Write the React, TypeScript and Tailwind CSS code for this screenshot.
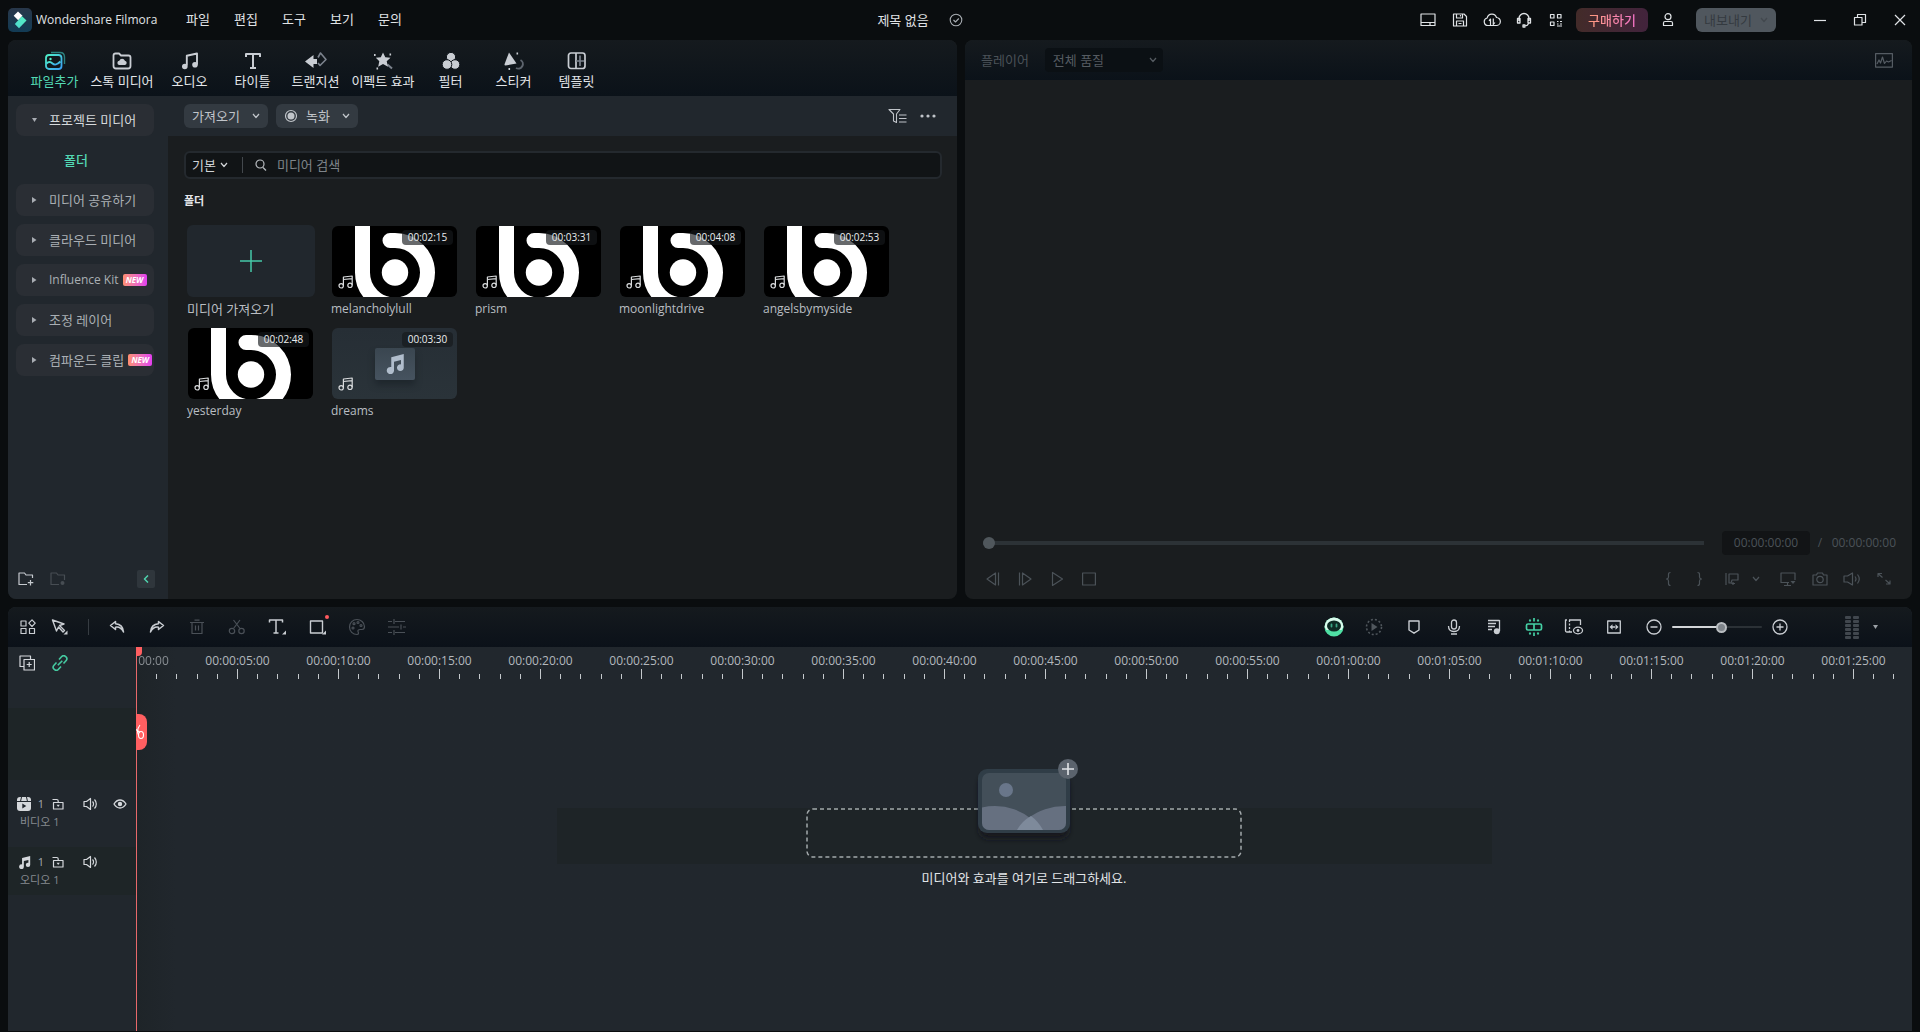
import type { ReactNode } from "react";

/* ---------- icon helpers ---------- */

type IconProps = {
  w?: number;
  h?: number;
  sw?: number;
  className?: string;
  children: ReactNode;
};

function Icon({ w = 18, h = 18, sw = 1.2, className = "", children }: IconProps) {
  return (
    <svg
      width={w}
      height={h}
      viewBox={`0 0 ${w} ${h}`}
      fill="none"
      stroke="currentColor"
      strokeWidth={sw}
      strokeLinejoin="round"
      className={`shrink-0 ${className}`}
      aria-hidden="true"
    >
      {children}
    </svg>
  );
}

function IconButton({
  label,
  className = "w-8",
  children,
}: {
  label: string;
  className?: string;
  children: ReactNode;
}) {
  return (
    <button
      type="button"
      aria-label={label}
      className={`flex h-8 shrink-0 items-center justify-center ${className}`}
    >
      {children}
    </button>
  );
}

const Chevron = ({ className = "" }: { className?: string }) => (
  <Icon w={8} h={6} sw={1.2} className={className}>
    <path d="M1 1l3 3.500L7 1" />
  </Icon>
);

const Speaker = () => (
  <Icon w={14} h={14} sw={1.2}>
    <path d="M1 4.500h2.500L7.500 1.500v11L3.500 9.500H1zM9.500 4.500a3.500 3.500 0 010 5M11.500 2.500a6.500 6.500 0 010 9" />
  </Icon>
);

const Lock = () => (
  <Icon w={12} h={12} sw={1.2}>
    <path d="M1.500 4.500h9.500v6.500h-9.500zM6.200 4.500V3a1.500 1.500 0 00-1.500-1.500H.500" />
    <path d="M4.600 6.800h3.200L6.200 9z" fill="currentColor" stroke="none" />
  </Icon>
);

const SolidNote = ({ s = 16 }: { s?: number }) => (
  <svg width={s} height={s} viewBox="0 0 16 16" fill="currentColor" aria-hidden="true">
    <path d="M5 2.500L15 0v10.800a2.700 2.700 0 11-2.200-2.500V4.800L7.200 6.200v7a2.900 2.900 0 11-2.200-2.800z" />
  </svg>
);

const OutlineNote = () => (
  <Icon w={16} h={14} sw={1.2}>
    <circle cx="3.200" cy="10.800" r="2.200" />
    <circle cx="12" cy="10.300" r="2.200" />
    <path d="M5.400 10.800V2l8.800-1v9.300M5.400 4.500l8.800-.8" />
  </Icon>
);

/* ---------- title bar ---------- */

function TitleBar() {
  return (
    <header className="flex h-10 shrink-0 items-center pl-2 text-[#e0e3e6]">
      <svg width="24" height="24" viewBox="0 0 24 24" aria-hidden="true">
        <defs>
          <linearGradient id="logoBg" x1="0" y1="0" x2="0" y2="1">
            <stop offset="0" stopColor="#28374a" />
            <stop offset="1" stopColor="#123b54" />
          </linearGradient>
          <linearGradient id="logoFg" x1="1" y1="0" x2="0" y2="1">
            <stop offset="0" stopColor="#55f0c0" />
            <stop offset="1" stopColor="#4fd8d0" />
          </linearGradient>
        </defs>
        <rect width="24" height="24" rx="5" fill="url(#logoBg)" />
        <path d="M10 3.500l4.500 4.300-4.300 4.500-4.500-4.500z" fill="#fff" />
        <path d="M14 8.300l4.500 4.200-7.500 7.700-4.200-4.200z" fill="url(#logoFg)" />
      </svg>
      <span className="ml-1 w-[115px] whitespace-nowrap text-xs">Wondershare Filmora</span>
      <nav className="mb-0.5 ml-[23px] flex text-[13px]">
        {["파일", "편집", "도구", "보기", "문의"].map((m) => (
          <button key={m} type="button" className="w-12 shrink-0 whitespace-nowrap">
            {m}
          </button>
        ))}
      </nav>
      <div className="flex flex-1 items-center justify-center gap-6 pl-3.5">
        <h1 className="text-[13px]">제목 없음</h1>
        <Icon w={14} h={14} sw={1.1} className="-ml-1 text-[#a8adb2]">
          <circle cx="7" cy="7" r="5.800" />
          <path d="M4.500 7l2 2 3.300-3.500" />
        </Icon>
      </div>
      <div className="flex items-center">
        <IconButton label="레이아웃">
          <Icon w={16} h={14}>
            <path d="M1 1h14v11.500H1zM1 9.500h14M10 9.500v3" />
          </Icon>
        </IconButton>
        <IconButton label="저장">
          <Icon w={16} h={16}>
            <path d="M1.500 2h10.500l2.500 2.500V14h-13zM4.500 2v4h6V2M4.500 14V9h7v5M8.500 3v1.500M6.500 11.500h3" />
          </Icon>
        </IconButton>
        <IconButton label="클라우드">
          <Icon w={18} h={16}>
            <path d="M5 13.500a3.800 3.800 0 01-.8-7.500A4.800 4.800 0 0113.500 5.500a4 4 0 01-.3 8zM7.500 13V7L6 8.800M10.300 6.500v6l1.600-2" />
          </Icon>
        </IconButton>
        <IconButton label="고객 지원">
          <Icon w={16} h={16} sw={1.3}>
            <path d="M3 9V6.500a5 5 0 0110 0V9M3 6.500H1.500v4.500H4V6.500zM13 6.500h1.500v4.500H12V6.500zM12.500 11q-.5 3-4 3M7 13h2v2H7z" />
          </Icon>
        </IconButton>
        <IconButton label="앱">
          <Icon w={14} h={14} sw={1.2}>
            <path d="M1.500 1.500h3.500v3.500H1.500zM8.500 1.500H12v3.500H8.500zM1.500 9H5v3.500H1.500zM8 8.500h1.500M11 8.500h2M8 11h1.500M11 11h2M8 13h5" />
          </Icon>
        </IconButton>
        <button
          type="button"
          className="ml-1 h-6 w-[72px] rounded-md bg-linear-to-r from-[#432b29] to-[#42233c] text-[13px] leading-6 font-medium"
        >
          <span className="bg-linear-to-r from-[#ff9a7a] to-[#f472c8] bg-clip-text text-transparent">
            구매하기
          </span>
        </button>
        <IconButton label="계정" className="ml-1 w-8">
          <Icon w={12} h={16}>
            <circle cx="6" cy="4.700" r="3" />
            <path d="M1.500 13.500V11q0-1.500 1.500-1.500h6q1.500 0 1.500 1.500v2.500z" />
          </Icon>
        </IconButton>
        <button
          type="button"
          className="ml-3 flex h-6 w-20 items-center justify-between rounded-md bg-[#50575e] px-2 text-[13px] text-[#343a40]"
        >
          내보내기
          <Chevron className="text-[#42484e]" />
        </button>
        <div className="ml-6 flex">
          <IconButton label="최소화" className="w-10">
            <Icon w={12} h={12}>
              <path d="M0 6.500h12" />
            </Icon>
          </IconButton>
          <IconButton label="창 복원" className="w-10">
            <Icon w={14} h={14}>
              <path d="M1.500 4.500h7.500V12H1.500zM4.500 4.500v-3H12.500v8H9" />
            </Icon>
          </IconButton>
          <IconButton label="닫기" className="w-10">
            <Icon w={12} h={12}>
              <path d="M1 1l10 10M11 1L1 11" />
            </Icon>
          </IconButton>
        </div>
      </div>
    </header>
  );
}

/* ---------- media panel ---------- */

const tabs: { label: string; wide?: boolean; active?: boolean; icon: ReactNode }[] = [
  {
    label: "파일추가",
    active: true,
    icon: (
      <svg width="22" height="20" viewBox="0 0 22 20" fill="none" strokeWidth="1.800" aria-hidden="true">
        <defs>
          <linearGradient id="mediaIcon" x1="0" y1="0" x2="1" y2="1">
            <stop offset="0" stopColor="#4ff0c8" />
            <stop offset="1" stopColor="#3aa0f5" />
          </linearGradient>
        </defs>
        <rect x="2" y="4" width="15.500" height="14" rx="3" stroke="url(#mediaIcon)" />
        <path d="M2.500 12.500q3-3 6 0t8-2" stroke="url(#mediaIcon)" />
        <circle cx="6.500" cy="8" r="1.200" fill="#4ff0c8" />
        <path d="M7 1.500h9q4.500 0 4.500 4.500v7" stroke="#2b7f7c" strokeWidth="1.400" />
      </svg>
    ),
  },
  {
    label: "스톡 미디어",
    wide: true,
    icon: (
      <Icon w={20} h={20} sw={1.8}>
        <path d="M1.500 4.500q0-2 2-2H7l2 2h7.500q2 0 2 2V15q0 2.500-2.500 2.500H4q-2.500 0-2.500-2.500z" />
        <path
          d="M7 14a2.200 2.200 0 01.3-4.300 3 3 0 015.600 0A2.200 2.200 0 0113 14z"
          fill="currentColor"
          stroke="none"
        />
      </Icon>
    ),
  },
  {
    label: "오디오",
    icon: (
      <Icon w={20} h={20} sw={1.9}>
        <path d="M6.800 14.500V4.800L17 2.500v11" />
        <circle cx="4.800" cy="15.500" r="2.800" fill="currentColor" stroke="none" />
        <circle cx="15" cy="13.800" r="2.800" fill="currentColor" stroke="none" />
      </Icon>
    ),
  },
  {
    label: "타이틀",
    icon: (
      <Icon w={18} h={20} sw={2}>
        <path d="M2 6V3h14v3M9 3v14M6 17h6" />
      </Icon>
    ),
  },
  {
    label: "트랜지션",
    icon: (
      <Icon w={24} h={20} sw={1.6}>
        <path d="M14 6.500L16.500 2 22 8.500 16 14.500l-2-2.500" stroke="#7b828c" />
        <path d="M1 10.500L9.500 4v4H13v5H9.500v4z" fill="currentColor" stroke="none" />
      </Icon>
    ),
  },
  {
    label: "이펙트 효과",
    wide: true,
    icon: (
      <Icon w={22} h={20} sw={2}>
        <path d="M15.500 13.500l4.500 4" stroke="#7b828c" />
        <path
          d="M11 1.500l2.300 4.800 5.200.4-3.800 3.600 1.300 5.500L11 13l-4.800 2.800L7.300 10.300 3.800 6.700l5-.4z"
          fill="currentColor"
          stroke="none"
        />
        <path d="M2 4h1.600M17.500 3.500h1.600M4.500 17.500h1.600" />
      </Icon>
    ),
  },
  {
    label: "필터",
    icon: (
      <Icon w={20} h={20} sw={1}>
        <g fill="currentColor" stroke="#10161c">
          <circle cx="10" cy="6" r="4.600" />
          <circle cx="14" cy="13.500" r="4.800" />
          <circle cx="6" cy="13.500" r="4.800" />
        </g>
      </Icon>
    ),
  },
  {
    label: "스티커",
    icon: (
      <Icon w={22} h={20} sw={2}>
        <path d="M17.500 9a4.500 4.500 0 11-4.500 8" stroke="#5d646d" />
        <path d="M6 1.500L13.500 12.500 2.500 14.500q-1.200 0-1-1.200z" fill="currentColor" stroke="none" />
        <path d="M13.500 2.500h1.600M5.500 18h1.600" />
      </Icon>
    ),
  },
  {
    label: "템플릿",
    icon: (
      <Icon w={20} h={18} sw={1.7}>
        <rect x="1.500" y="1" width="16.500" height="15.500" rx="2.500" />
        <path d="M9 1v15.500" />
        <path d="M13 3.500V14M9 9h8" stroke="#7b828c" />
      </Icon>
    ),
  },
];

const sidebarItems: { label: string; latin?: boolean; isNew?: boolean }[] = [
  { label: "미디어 공유하기" },
  { label: "클라우드 미디어" },
  { label: "Influence Kit", latin: true, isNew: true },
  { label: "조정 레이어" },
  { label: "컴파운드 클립", isNew: true },
];

function Sidebar() {
  return (
    <aside className="flex w-40 shrink-0 flex-col bg-[#21272d] px-2 pt-2 text-[13px]">
      <div className="flex flex-col gap-2 pr-1.5">
        <button type="button" className="flex h-8 items-center rounded-lg bg-[#2a2e34] pl-4 text-[#d6dadd]">
          <Icon w={5} h={4} className="mr-3">
            <path d="M0 0h5L2.500 4z" fill="#a8acb2" stroke="none" />
          </Icon>
          프로젝트 미디어
        </button>
        <button type="button" className="h-8 pl-12 text-left font-medium text-[#53d9b4]">
          폴더
        </button>
        {sidebarItems.map((it) => (
          <button
            key={it.label}
            type="button"
            className="flex h-8 items-center rounded-lg bg-[#2a2e34] pl-4 whitespace-nowrap text-[#a9aeb3]"
          >
            <Icon w={5} h={6} className="mr-3">
              <path d="M0 0v6l4.500-3z" fill="#a8acb2" stroke="none" />
            </Icon>
            <span className={it.latin ? "text-xs font-medium" : ""}>{it.label}</span>
            {it.isNew && (
              <span className="ml-1 h-3 w-6 rounded-xs bg-linear-to-r from-[#ff8f6e] to-[#e23cf0] text-center text-[8px] leading-3 font-bold text-white italic">
                NEW
              </span>
            )}
          </button>
        ))}
      </div>
      <div className="mt-auto flex h-10 items-center pr-[5px]">
        <IconButton label="새 폴더" className="w-6">
          <Icon w={16} h={14} className="-ml-1 text-[#c6cacf]">
            <path d="M14.500 6V3H8L6.500 1H1v11.500h8M12.500 8v5.500M9.800 10.700h5.500" />
          </Icon>
        </IconButton>
        <IconButton label="폴더 삭제" className="ml-2 w-6">
          <Icon w={16} h={14} className="-ml-1 text-[#474d53]">
            <path d="M14.500 8V3H8L6.500 1H1v11.500h8" />
            <circle cx="12.500" cy="11" r="2" fill="currentColor" stroke="none" />
          </Icon>
        </IconButton>
        <button
          type="button"
          aria-label="접기"
          className="ml-auto flex h-[18px] w-[18px] items-center justify-center rounded-xs bg-[#2f363c] text-[#4fd3ae]"
        >
          <Icon w={6} h={8} sw={1.5}>
            <path d="M5 0.500L1.500 4 5 7.500" />
          </Icon>
        </button>
      </div>
    </aside>
  );
}

function BThumb() {
  return (
    <svg viewBox="0 0 125 71" className="h-full w-full bg-black" aria-hidden="true">
      <path
        d="M30.500 -8V46.500A32.500 32.500 0 0 0 95.500 46.500A32.500 32.500 0 0 0 63 14.500H58"
        fill="none"
        stroke="#fff"
        strokeWidth="15"
        strokeLinecap="round"
      />
      <circle cx="63" cy="46.500" r="13.200" fill="#fff" />
    </svg>
  );
}

function PlainThumb() {
  return (
    <div className="flex h-full w-full justify-center bg-linear-to-b from-[#262e35] to-[#2a3339] pt-5">
      <div className="flex h-8 w-10 items-center justify-center rounded-xs bg-linear-to-b from-[#3a4650] to-[#46535f] text-[#b0bdcc] shadow-[0_5px_6px_#1f272d]">
        <SolidNote s={20} />
      </div>
    </div>
  );
}

const clips = [
  { name: "melancholylull", time: "00:02:15" },
  { name: "prism", time: "00:03:31" },
  { name: "moonlightdrive", time: "00:04:08" },
  { name: "angelsbymyside", time: "00:02:53" },
  { name: "yesterday", time: "00:02:48" },
  { name: "dreams", time: "00:03:30", plain: true },
];

function MediaPanel() {
  return (
    <section className="flex min-w-0 flex-col overflow-hidden rounded-lg bg-[#1a1d1f]">
      <div className="flex h-14 shrink-0 bg-linear-to-b from-[#151a1e] to-[#0b1219] pl-[15px]">
        {tabs.map((t) => (
          <button
            key={t.label}
            type="button"
            className={`flex flex-col items-center pt-2.5 text-[13px] leading-5 whitespace-nowrap ${
              t.wide ? "w-[72px]" : "w-[63px]"
            } ${t.active ? "text-[#53d9b4]" : "text-[#e3e6e9]"}`}
          >
            <span className="flex h-[21px] items-center text-[#c9cdd3]">{t.icon}</span>
            {t.label}
          </button>
        ))}
      </div>
      <div className="flex min-h-0 flex-1">
        <Sidebar />
        <div className="flex min-w-0 flex-1 flex-col">
          <div className="flex h-10 shrink-0 items-center gap-2 bg-[#21272d] pr-[19px] pl-4 text-[13px] text-[#c0c4c9]">
            <button
              type="button"
              className="flex h-6 w-[84px] items-center justify-between rounded-md bg-[#333a41] px-2"
            >
              가져오기
              <Chevron />
            </button>
            <button type="button" className="flex h-6 w-[82px] items-center rounded-md bg-[#333a41] px-2">
              <Icon w={14} h={14}>
                <circle cx="7" cy="7" r="5.500" />
                <circle cx="7" cy="7" r="3.500" fill="currentColor" stroke="none" />
              </Icon>
              <span className="ml-2">녹화</span>
              <Chevron className="ml-auto" />
            </button>
            <IconButton label="정렬" className="ml-auto w-6">
              <Icon w={20} h={16} sw={1.1}>
                <path d="M1 1.500h11L8.500 6v8.500l-3-1.500V6zM11 7h7.500M11 10.500h7.500M11 14h7.500" />
              </Icon>
            </IconButton>
            <IconButton label="더보기" className="w-5">
              <Icon w={16} h={4}>
                <g fill="currentColor" stroke="none">
                  <circle cx="2" cy="2" r="1.600" />
                  <circle cx="8" cy="2" r="1.600" />
                  <circle cx="14" cy="2" r="1.600" />
                </g>
              </Icon>
            </IconButton>
          </div>
          <div className="pt-[15px] pr-[15px] pl-4 text-[13px]">
            <div className="flex h-7 items-center rounded-md border-2 border-[#24292e] bg-[#111416] pl-1.5">
              <button type="button" className="flex items-center gap-1 text-[#d0d3d6]">
                기본
                <Chevron />
              </button>
              <span className="mr-3 ml-3.5 h-4 w-px bg-[#43484d]" />
              <Icon w={12} h={12} className="text-[#b9bdc1]">
                <circle cx="5" cy="5" r="4" />
                <path d="M8 8.500l3 3" />
              </Icon>
              <input
                type="text"
                aria-label="미디어 검색"
                placeholder="미디어 검색"
                className="ml-2.5 min-w-0 flex-1 bg-transparent outline-none placeholder:text-[#7f858a]"
              />
            </div>
            <h2 className="mt-3 text-[11px] leading-5 font-bold text-[#e6e8ea]">폴더</h2>
            <ul className="mt-3.5 ml-[3px] grid grid-cols-[repeat(auto-fill,128px)] gap-x-4 text-[#b9bdc2]">
              <li className="h-[102px]">
                <button type="button" className="w-full text-left whitespace-nowrap">
                  <span className="flex h-[72px] items-center justify-center rounded-md bg-[#21272d]">
                    <Icon w={24} h={24} sw={1.5} className="text-[#45c9a8]">
                      <path d="M12 1v22M1 12h22" />
                    </Icon>
                  </span>
                  <span className="block leading-6">미디어 가져오기</span>
                </button>
              </li>
              {clips.map((c) => (
                <li key={c.name} className="h-[102px]">
                  <div className="relative mx-px mt-px h-[71px] w-[125px] overflow-hidden rounded-md">
                    {c.plain ? <PlainThumb /> : <BThumb />}
                    <span className="absolute top-1 right-1 h-[15px] w-[51px] rounded bg-[#15191c]/65 text-center text-[10px] leading-[15px] font-medium text-[#eceef0]">
                      {c.time}
                    </span>
                    <span className="absolute bottom-2 left-1.5 text-[#d9dbdd]">
                      <OutlineNote />
                    </span>
                  </div>
                  <span className="block text-xs leading-6">{c.name}</span>
                </li>
              ))}
            </ul>
          </div>
        </div>
      </div>
    </section>
  );
}

/* ---------- player ---------- */

function Player() {
  return (
    <section className="flex min-w-0 flex-col overflow-hidden rounded-lg bg-[#1a1d1f] text-[#4b5258]">
      <div className="flex h-10 shrink-0 items-center bg-linear-to-b from-[#151a1e] to-[#0b1219] px-4 text-[13px]">
        <label htmlFor="quality">플레이어</label>
        <div className="relative ml-4 flex items-center text-[#555b61]">
          <select
            id="quality"
            className="h-6 w-[118px] appearance-none rounded bg-[#0b1014] pl-2 text-[13px] outline-none"
          >
            <option>전체 품질</option>
          </select>
          <Chevron className="pointer-events-none absolute right-1.5" />
        </div>
        <IconButton label="스코프" className="ml-auto w-6">
          <Icon w={18} h={15} className="text-[#555c63]">
            <path d="M.6.600h16.800v13.500H.6zM2 11l2-4 1.500 3L7.500 4l2 6.500 2-2.500 2 1 3-1.500" />
          </Icon>
        </IconButton>
      </div>
      <div className="flex-1" />
      <div className="flex h-8 items-center pr-4 pl-[18px] text-xs">
        <input
          type="range"
          aria-label="재생 위치"
          defaultValue={0}
          className="h-1 min-w-0 flex-1 appearance-none bg-[#2c3236] outline-none [&::-webkit-slider-thumb]:size-3 [&::-webkit-slider-thumb]:appearance-none [&::-webkit-slider-thumb]:rounded-full [&::-webkit-slider-thumb]:bg-[#50575c]"
        />
        <span className="ml-[18px] h-6 w-[88px] rounded bg-[#121416] text-center leading-6">00:00:00:00</span>
        <span className="w-5 text-center">/</span>
        <span className="w-[66px] text-right">00:00:00:00</span>
      </div>
      <div className="mt-0.5 mb-0.5 flex h-9 items-center px-3">
        <IconButton label="이전 프레임">
          <Icon w={16} h={16}>
            <path d="M10.500 2v12L2 8zM13.500 1.500v13" />
          </Icon>
        </IconButton>
        <IconButton label="다음 프레임">
          <Icon w={16} h={16}>
            <path d="M5.500 2v12L14 8zM2.500 1.500v13" />
          </Icon>
        </IconButton>
        <IconButton label="재생">
          <Icon w={14} h={16}>
            <path d="M2.500 1.500v13L12.500 8z" />
          </Icon>
        </IconButton>
        <IconButton label="정지">
          <Icon w={14} h={14}>
            <path d="M.600 1h12.800v12H.600z" />
          </Icon>
        </IconButton>
        <div className="ml-auto flex items-center">
          <IconButton label="시작 표시">
            <Icon w={6} h={16}>
              <path d="M5.500 1.500q-2 0-2 2v2.500q0 1.800-2 2 2 .2 2 2v2.500q0 2 2 2" />
            </Icon>
          </IconButton>
          <IconButton label="끝 표시">
            <Icon w={6} h={16}>
              <path d="M.500 1.500q2 0 2 2v2.500q0 1.800 2 2-2 .2-2 2v2.500q0 2-2 2" />
            </Icon>
          </IconButton>
          <IconButton label="비교">
            <Icon w={14} h={14}>
              <path d="M1 1v12M4 2h9v6H7l-1 3H4zM8 10v3M6.500 11.500h3.500" />
            </Icon>
          </IconButton>
          <IconButton label="비교 옵션" className="mr-2 w-4">
            <Chevron />
          </IconButton>
          <IconButton label="화면">
            <Icon w={16} h={15}>
              <path d="M9 10.500H1V1h14v7M4 13.500h7M7.500 10.500v3" />
              <path d="M10.500 9h5L13 12z" fill="currentColor" stroke="none" />
            </Icon>
          </IconButton>
          <IconButton label="스냅샷">
            <Icon w={16} h={14}>
              <path d="M1 3h3.500l1-2h5l1 2H15v10H1z" />
              <circle cx="8" cy="7.500" r="3.200" />
            </Icon>
          </IconButton>
          <IconButton label="볼륨">
            <Icon w={18} h={14}>
              <path d="M1 4h3.500l5-3v12l-5-3H1zM12 4.500q2 2.500 0 5M14.500 2.500q3.500 4.500 0 9" />
            </Icon>
          </IconButton>
          <IconButton label="전체 화면">
            <Icon w={14} h={14}>
              <path d="M1 5V1.500h4M1.500 2l4 3.500M13 8.500V12H9M12.500 11.500l-4-3.500" />
            </Icon>
          </IconButton>
        </div>
      </div>
    </section>
  );
}

/* ---------- timeline ---------- */

const pad = (n: number) => String(n).padStart(2, "0");
const marks = Array.from({ length: 18 }, (_, i) => {
  const s = i * 5;
  return `00:${pad(Math.floor(s / 60))}:${pad(s % 60)}:00`;
});

const Corner = () => <path d="M16.500 12.500v4h-4z" fill="currentColor" stroke="none" />;

function TimelineToolbar() {
  return (
    <div className="flex h-10 shrink-0 items-center bg-linear-to-b from-[#151a1e] to-[#0b1119] pl-1 text-[#c9cdd2]">
      <IconButton label="보기 모드">
        <Icon w={16} h={16}>
          <path d="M1 2h5v5H1zM1 9.500h5v5H1zM9.500 9.500h5v5h-5zM12 .800l3.200 3.400L12 7.500 8.800 4.200z" />
        </Icon>
      </IconButton>
      <IconButton label="선택">
        <Icon sw={1.4}>
          <path d="M1.500 2l11.500 4-4.500 1.500 5 5-1.500 1.500-4.500-5-2 4z" />
          <Corner />
        </Icon>
      </IconButton>
      <span className="mx-3 h-4 w-px bg-[#363c42]" />
      <IconButton label="실행 취소" className="w-8">
        <Icon w={16} h={14} sw={1.5}>
          <path d="M6.500 1.500L1.500 5.500l5 4V7.200q5-1 8 4.800Q14 4.500 6.500 3.800z" />
        </Icon>
      </IconButton>
      <div className="ml-1 flex">
        <IconButton label="다시 실행" className="w-10">
          <Icon w={16} h={14} sw={1.5}>
            <path d="M9.500 1.500l5 4-5 4V7.200q-5-1-8 4.800Q2 4.500 9.500 3.800z" />
          </Icon>
        </IconButton>
        <IconButton label="삭제" className="w-10 text-[#4a5057]">
          <Icon w={16} h={16}>
            <path d="M1 3.500h14M5.500 1.200h5M3 3.500V14.500h10V3.500M6.500 6.500v5M9.500 6.500v5" />
          </Icon>
        </IconButton>
        <IconButton label="자르기" className="w-10 text-[#4a5057]">
          <Icon w={18} h={16}>
            <circle cx="4" cy="12" r="2.700" />
            <circle cx="13.500" cy="12" r="2.700" />
            <path d="M5.500 9.500L12 1M12 9.500L5.500 1" />
          </Icon>
        </IconButton>
        <IconButton label="텍스트" className="w-10">
          <Icon w={20} h={18} sw={1.500}>
            <path d="M2.500 4.500V2h13v2.500M9 2v13M6.500 15h5" />
            <path d="M19 12.500v4h-4z" fill="currentColor" stroke="none" />
          </Icon>
        </IconButton>
        <IconButton label="도형" className="relative w-10">
          <Icon w={20} h={18} sw={1.4}>
            <path d="M3.500 3h12v12h-12z" />
            <path d="M19 12.500v4h-4z" fill="currentColor" stroke="none" />
          </Icon>
          <span className="absolute top-1 right-2 size-1 rounded-full bg-[#ff5a5f]" />
        </IconButton>
        <IconButton label="색상" className="w-10 text-[#4a5057]">
          <Icon>
            <path d="M9 1.500a7.500 7.500 0 100 15c2 0 1.500-2 1-3s.5-2 2-2h2q2.500 0 2.500-3A7.500 7.500 0 009 1.500z" />
            <circle cx="5" cy="10" r="1" />
            <circle cx="6" cy="5.700" r="1" />
            <circle cx="10" cy="4.500" r="1" />
            <circle cx="13" cy="7.500" r="1" />
          </Icon>
        </IconButton>
        <IconButton label="조정" className="w-10 text-[#4a5057]">
          <Icon>
            <path d="M0 3.500h4M7 3.500h10M6 1v5M0 9h11M15 9h3M13 6.500v5M0 14.500h4M7 14.500h10M6 12v5" />
          </Icon>
        </IconButton>
      </div>

      <div className="ml-auto flex items-center">
        <IconButton label="AI 도우미" className="w-10">
          <svg width="20" height="20" viewBox="0 0 20 20" aria-hidden="true">
            <circle cx="10" cy="10" r="9.500" fill="#4fe0a4" />
            <path d="M.500 10a9.500 9.500 0 0119 0l-2 3H2.500z" fill="#d9fbec" />
            <ellipse cx="10" cy="9" rx="7" ry="5.500" fill="#0d2b24" />
            <path d="M7.500 7.500v2M12.500 7.500v2" stroke="#3aa584" strokeWidth="1.800" strokeLinecap="round" />
          </svg>
        </IconButton>
        <IconButton label="렌더링" className="w-10 text-[#50575d]">
          <Icon w={18} h={18} sw={1.6}>
            <circle cx="9" cy="9" r="7.500" strokeDasharray="2 2" />
            <path d="M6.500 5v8l6-4z" fill="currentColor" stroke="none" />
          </Icon>
        </IconButton>
        <IconButton label="마커" className="w-10">
          <Icon w={12} h={14} sw={1.4}>
            <path d="M1 1h10v9l-5 3.200L1 10z" />
          </Icon>
        </IconButton>
        <IconButton label="녹음" className="w-10">
          <Icon w={14} h={16} sw={1.3}>
            <rect x="4.500" y="1" width="5" height="9" rx="2.500" />
            <path d="M1.500 7q0 5.500 5.500 5.500T12.500 7M4 15h6" />
          </Icon>
        </IconButton>
        <IconButton label="오디오 믹서" className="w-10">
          <Icon w={14} h={16} sw={1.3}>
            <path d="M1 1.500h11.500M1 4.500h8M1 7.500h7M1 10.500h4M12.500 1v11" />
            <circle cx="9.800" cy="12.200" r="3" fill="currentColor" stroke="none" />
          </Icon>
        </IconButton>
        <IconButton label="자동 리플" className="w-10 text-[#45d1a5]">
          <Icon w={18} h={18} sw={1.7}>
            <rect x="1.500" y="6" width="15" height="6" rx="1.500" />
            <path d="M9 6v6M9 0v3.500M9 14.500V18M4.500 1.500l1 2M13.500 1.500l-1 2M4.500 16.500l1-2M13.500 16.500l-1-2" />
          </Icon>
        </IconButton>
        <IconButton label="프레임 보기" className="w-10">
          <Icon w={20} h={16} sw={1.3}>
            <path d="M5 1h11.500v5M8 13H3q-1.500 0-1.500-1.500V1H3" />
            <path d="M5.500 1v12" strokeDasharray="2 1.500" />
            <ellipse cx="14" cy="11.500" rx="4.500" ry="3.300" />
            <circle cx="14" cy="11.500" r="1.400" fill="currentColor" stroke="none" />
          </Icon>
        </IconButton>
        <IconButton label="맞춤" className="w-10">
          <Icon w={14} h={14} sw={1.3}>
            <path d="M.700 1h12.600v12H.700z" />
            <path d="M2.500 7l3-2.700v5.400zM11.500 7l-3-2.700v5.400zM5 6.200h4v1.600H5z" fill="currentColor" stroke="none" />
          </Icon>
        </IconButton>
        <IconButton label="축소" className="w-10">
          <Icon w={16} h={16} sw={1.3}>
            <circle cx="8" cy="8" r="7" />
            <path d="M4.500 8h7" />
          </Icon>
        </IconButton>
        <input
          type="range"
          aria-label="타임라인 확대/축소"
          defaultValue={56}
          className="-ml-0.5 h-0.5 w-[90px] appearance-none rounded-full bg-linear-to-r from-[#d3d6d9] from-55% to-[#2b3136] to-55% outline-none [&::-webkit-slider-thumb]:size-[11px] [&::-webkit-slider-thumb]:appearance-none [&::-webkit-slider-thumb]:rounded-full [&::-webkit-slider-thumb]:border-2 [&::-webkit-slider-thumb]:border-[#b9bdc1] [&::-webkit-slider-thumb]:bg-[#7d8389]"
        />
        <IconButton label="확대" className="w-9">
          <Icon w={16} h={16} sw={1.3}>
            <circle cx="8" cy="8" r="7" />
            <path d="M4.500 8h7M8 4.500v7" />
          </Icon>
        </IconButton>
        <button type="button" aria-label="오디오 미터" className="mr-[34px] ml-[47px] flex items-center gap-3.5">
          <span className="grid grid-cols-2 gap-x-0.5 gap-y-px">
            {Array.from({ length: 12 }, (_, i) => (
              <span key={i} className="h-[3px] w-1.5 rounded-[1px] bg-[#41474e]" />
            ))}
          </span>
          <Icon w={5} h={4}>
            <path d="M0 0h5L2.500 4z" fill="#9ca1a6" stroke="none" />
          </Icon>
        </button>
      </div>
    </div>
  );
}

function TrackHeaders() {
  return (
    <div className="flex w-32 shrink-0 flex-col text-[#d5d8dc]">
      <div className="flex h-8 items-center pl-1">
        <IconButton label="트랙 추가" className="w-[30px]">
          <Icon w={16} h={16}>
            <path d="M5 11.500H1V1h10.500v3.500M5 4.500h10.500V15H5zM10.200 7v5M7.700 9.500h5" />
          </Icon>
        </IconButton>
        <IconButton label="링크" className="ml-0.5 w-8 text-[#45c9a0]">
          <Icon w={16} h={16} sw={1.6}>
            <path d="M7 4.500l2.500-2.700a2.900 2.900 0 014.500 4L11.500 8.500M9 11.500l-2.500 2.700a2.900 2.900 0 01-4.500-4L4.500 7.500M5.800 10.200l4.500-4.500" />
          </Icon>
        </IconButton>
      </div>
      <div className="mt-[29px] h-[72px] bg-[#1e2527]" />
      <div className="flex h-[67px] flex-col pt-4 pl-2">
        <div className="flex h-4 items-center text-[11px]">
          <svg width="16" height="14" viewBox="0 0 16 14" aria-hidden="true">
            <rect x="1" width="14" height="14" rx="3" fill="currentColor" />
            <path d="M1 4.500h14M5.500 0l-1 4.500M10.500 0l1 4.500" stroke="#21272d" />
            <path d="M6.300 6.500v5l4-2.500z" fill="#21272d" />
          </svg>
          <span className="w-3 text-right text-[#a5aaaf]">1</span>
          <button type="button" aria-label="비디오 트랙 잠금" className="ml-2">
            <Lock />
          </button>
          <button type="button" aria-label="비디오 트랙 음소거" className="ml-[19px]">
            <Speaker />
          </button>
          <button type="button" aria-label="비디오 트랙 표시" className="ml-4">
            <Icon w={14} h={12} sw={1.3}>
              <path d="M1 6q2.500-4 6-4t6 4q-2.500 4-6 4T1 6z" />
              <circle cx="7" cy="6" r="2.200" fill="currentColor" stroke="none" />
            </Icon>
          </button>
        </div>
        <span className="ml-1 text-[11px] leading-5 text-[#858a8f]">비디오 1</span>
      </div>
      <div className="flex h-12 flex-col bg-[#1e2527] pt-[7px] pl-2">
        <div className="flex h-4 items-center text-[11px]">
          <span className="flex w-4 justify-center">
            <SolidNote s={13} />
          </span>
          <span className="w-3 text-right text-[#a5aaaf]">1</span>
          <button type="button" aria-label="오디오 트랙 잠금" className="ml-2">
            <Lock />
          </button>
          <button type="button" aria-label="오디오 트랙 음소거" className="ml-[19px]">
            <Speaker />
          </button>
        </div>
        <span className="ml-1 text-[11px] leading-5 text-[#858a8f]">오디오 1</span>
      </div>
    </div>
  );
}

function Ruler() {
  return (
    <div className="h-8 overflow-hidden">
      <div className="-ml-[50px] flex">
        {marks.map((m, i) => (
          <div key={m} className="w-[101px] shrink-0 pt-1 text-center">
            <div className={`h-[18px] text-xs leading-5 text-[#b3b8bd] ${i === 0 ? "pl-[34px] opacity-70" : ""}`}>
              {i === 0 ? "00:00" : m}
            </div>
            <div className="flex h-2.5 items-end">
              {[0, 1, 2, 3, 4].map((k) => (
                <div key={k} className="flex flex-1 justify-center">
                  <span className={`w-px bg-[#c5c9cd] ${k === 2 ? "h-2.5" : "h-[5px]"}`} />
                </div>
              ))}
            </div>
          </div>
        ))}
      </div>
    </div>
  );
}

function DropArt() {
  return (
    <svg width="108" height="90" viewBox="0 0 108 90" className="ml-0.5" aria-hidden="true">
      <defs>
        <clipPath id="photo">
          <rect x="11" y="17" width="84" height="57" rx="7" />
        </clipPath>
        <filter id="soft" x="-20%" y="-20%" width="140%" height="150%">
          <feGaussianBlur stdDeviation="3" />
        </filter>
      </defs>
      <rect x="9" y="20" width="88" height="62" rx="8" fill="#14191d" filter="url(#soft)" />
      <rect x="7" y="13" width="92" height="64" rx="9" fill="#303d47" />
      <g clipPath="url(#photo)">
        <rect x="11" y="17" width="84" height="57" fill="#434f59" />
        <ellipse cx="24" cy="92" rx="50" ry="42" fill="#667080" />
        <ellipse cx="94" cy="92" rx="52" ry="42" fill="#667080" />
        <path d="M60 60q-9 5-14 14h26q-5-9-12-14z" fill="#7e8a9b" />
      </g>
      <circle cx="35" cy="34" r="7" fill="#69768a" />
      <circle cx="97" cy="13" r="10" fill="#5b636d" />
      <path d="M91 13h12M97 7v12" stroke="#e1e4e8" strokeWidth="1.600" />
    </svg>
  );
}

function Timeline() {
  return (
    <section className="flex min-h-0 flex-[424] flex-col overflow-hidden rounded-t-lg bg-[#21272d]">
      <TimelineToolbar />
      <div className="flex min-h-0 flex-1">
        <TrackHeaders />
        <div className="relative flex min-w-0 flex-1 flex-col bg-linear-to-r from-[#1e2428] to-[#21272d] to-[40px]">
          <Ruler />
          <div className="mt-[129px] flex h-14 justify-center">
            <div className="relative h-full w-[935px] bg-[#1e2427]">
              <svg className="mx-auto h-[50px] w-[436px]" aria-hidden="true">
                <rect
                  x="1"
                  y="1"
                  width="434"
                  height="48"
                  rx="6"
                  fill="none"
                  stroke="#a3a9ac"
                  strokeWidth="1.500"
                  strokeDasharray="4 3"
                />
              </svg>
              <div className="absolute inset-x-0 -top-[52px] flex justify-center">
                <DropArt />
              </div>
            </div>
          </div>
          <p className="mt-1 text-center text-[13px] leading-5 text-[#e2e5e8]">
            미디어와 효과를 여기로 드래그하세요.
          </p>
          <div className="absolute inset-y-0 left-0 w-px bg-[#e8686a]">
            <div className="h-[9px] w-1.5 rounded-br bg-[#ff5f61]" />
            <div className="mt-[58px] flex h-9 w-[11px] items-center rounded-r-lg bg-[#ff5f61]">
              <Icon w={9} h={18} sw={1.1} className="text-white">
                <path d="M4 2Q0 7 2.500 12" />
                <ellipse cx="5" cy="12" rx="2.500" ry="3.500" />
                <path d="M0 6.500l4 3" />
              </Icon>
            </div>
          </div>
        </div>
      </div>
    </section>
  );
}

export default function App() {
  return (
    <div className="flex h-screen flex-col bg-[#0a0d0f] pb-px font-['Open_Sans','Noto_Sans_CJK_KR',sans-serif] leading-5">
      <TitleBar />
      <main className="flex min-h-0 flex-1 flex-col gap-2 px-2">
        <div className="grid min-h-0 flex-[559] grid-cols-[949fr_947fr] gap-2">
          <MediaPanel />
          <Player />
        </div>
        <Timeline />
      </main>
    </div>
  );
}
